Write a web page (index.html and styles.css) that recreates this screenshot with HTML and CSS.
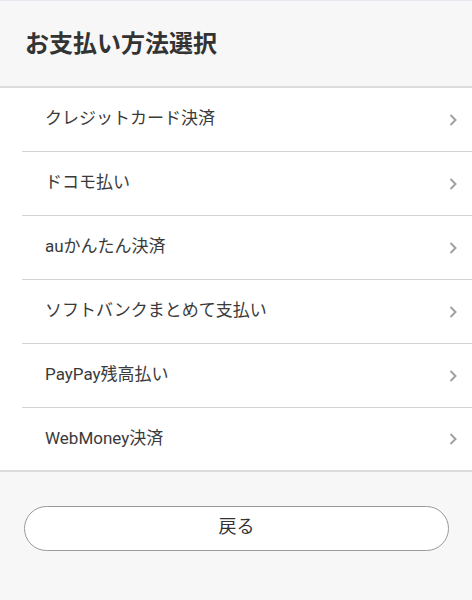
FILE: index.html
```html
<!DOCTYPE html>
<html lang="ja">
  <head>
    <meta charset="UTF-8" />
    <meta name="viewport" content="width=device-width, initial-scale=1.0" />
    <title>お支払い方法選択</title>
    <link rel="stylesheet" href="styles.css">
  </head>
  <body>
    <div class="page-header">
      <h1>お支払い方法選択</h1>
    </div>

    <ul class="pay-list">
      <li class="pay-item"><span>クレジットカード決済</span><svg class="chevron" viewBox="0 0 8 12"><path d="M1.5 1 L6.5 6 L1.5 11" /></svg></li>
      <li class="pay-item"><span>ドコモ払い</span><svg class="chevron" viewBox="0 0 8 12"><path d="M1.5 1 L6.5 6 L1.5 11" /></svg></li>
      <li class="pay-item"><span>auかんたん決済</span><svg class="chevron" viewBox="0 0 8 12"><path d="M1.5 1 L6.5 6 L1.5 11" /></svg></li>
      <li class="pay-item"><span>ソフトバンクまとめて支払い</span><svg class="chevron" viewBox="0 0 8 12"><path d="M1.5 1 L6.5 6 L1.5 11" /></svg></li>
      <li class="pay-item"><span>PayPay残高払い</span><svg class="chevron" viewBox="0 0 8 12"><path d="M1.5 1 L6.5 6 L1.5 11" /></svg></li>
      <li class="pay-item"><span>WebMoney決済</span><svg class="chevron" viewBox="0 0 8 12"><path d="M1.5 1 L6.5 6 L1.5 11" /></svg></li>
    </ul>

    <div class="actions">
      <button class="back-btn">戻る</button>
    </div>
  </body>
</html>
```

FILE: styles.css
```css
body {
  margin: 0;
  background: #f7f7f7;
  color: #333;
  font-family: Roboto, "Noto Sans CJK JP", sans-serif;
  min-height: 600px;
}

.page-header {
  border-top: 1px solid #e6e6ee;
  border-bottom: 2px solid #dcdcdc;
  height: 85px;
  display: flex;
  align-items: center;
  padding-left: 25px;
}

.page-header h1 {
  margin: 0;
  font-size: 24px;
  font-weight: bold;
  color: #333;
  line-height: 1;
  padding-top: 1px;
}

.pay-list {
  list-style: none;
  margin: 0;
  padding: 0 0 0 22px;
  background: #fff;
  border-bottom: 2px solid #dcdcdc;
}

.pay-item {
  height: 63px;
  display: flex;
  align-items: center;
  justify-content: space-between;
  padding: 0 15px 0 23px;
  border-bottom: 1px solid #d2d2d2;
  font-size: 17px;
  line-height: 1;
  color: #3a3a3a;
  cursor: pointer;
}

.pay-item span {
  padding-bottom: 2px;
}

.pay-item:last-child {
  border-bottom: none;
  height: 62px;
}

.chevron {
  width: 8px;
  height: 12px;
  fill: none;
  stroke: #a0a0a0;
  stroke-width: 2;
}

.actions {
  padding: 34px 23px 0 24px;
}

.back-btn {
  width: 100%;
  height: 45px;
  background: #fff;
  border: 1px solid #9a9a9a;
  border-radius: 23px;
  font-family: Roboto, "Noto Sans CJK JP", sans-serif;
  font-size: 18px;
  line-height: 1;
  padding: 0 0 4px;
  color: #333;
  cursor: pointer;
}
```
